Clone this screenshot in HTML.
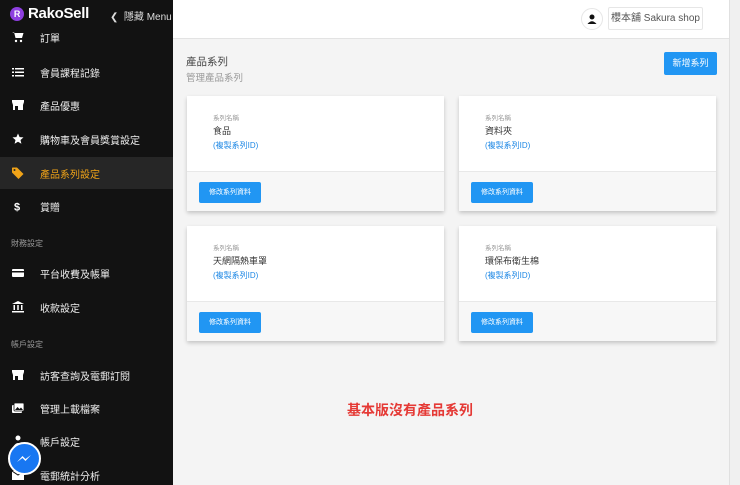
<!DOCTYPE html>
<html><head><meta charset="utf-8"><style>
*{margin:0;padding:0;box-sizing:border-box}
html,body{width:740px;height:485px;overflow:hidden}
body{background:#f4f4f4;font-family:"Liberation Sans","Noto Sans CJK TC",sans-serif;position:relative}
.sb{position:absolute;left:0;top:0;width:173px;height:485px;background:#121212;color:#eee}
.logo{position:absolute;left:10px;top:5px;display:flex;align-items:center;font-weight:bold;font-size:15px;color:#fff;letter-spacing:-0.3px}
.logo i{width:14px;height:14px;border-radius:50%;background:#8e3fe0;display:inline-block;margin-right:4px;font-style:normal;font-size:9px;text-align:center;line-height:14px}
.hide{position:absolute;left:110px;top:8px;font-size:10px;color:#ddd}
.it{position:absolute;left:0;width:173px;height:32px;font-size:10px;display:flex;align-items:center}
.it svg{margin-left:12px;margin-right:16px;flex:none}
.it.act{background:#262626;color:#f0a318}
.lab{position:absolute;left:11px;font-size:8px;color:#999}
.hd{position:absolute;left:173px;top:0;width:556px;height:39px;background:#fff;border-bottom:1px solid #e3e3e3}
.av{position:absolute;left:408px;top:8px;width:22px;height:22px;border-radius:50%;border:1px solid #e6e6e6;background:#fff}
.shop{position:absolute;left:435px;top:7px;width:95px;height:23px;border:1px solid #e6e6e6;font-size:10px;color:#555;line-height:21px;text-align:center;border-radius:2px;white-space:nowrap}
.sc{position:absolute;left:729px;top:0;width:11px;height:485px;background:#f0f0f0;border-left:1px solid #e0e0e0}
.t1{position:absolute;left:186px;top:54px;font-size:10.5px;color:#444}
.t2{position:absolute;left:186px;top:70px;font-size:9.5px;color:#999}
.add{position:absolute;left:664px;top:52px;width:53px;height:23px;background:#2196f3;color:#fff;font-size:9px;line-height:23px;text-align:center;border-radius:2px}
.card{position:absolute;width:257px;height:115px;background:#fff;box-shadow:0 2px 4px rgba(0,0,0,.2)}
.card .ft{position:absolute;left:0;top:75px;width:100%;height:40px;background:#f7f7f7;border-top:1px solid #e8e8e8}
.card .l{position:absolute;left:26px;top:16px;font-size:6.5px;color:#999}
.card .n{position:absolute;left:26px;top:28px;font-size:9px;color:#333}
.card .c{position:absolute;left:26px;top:44px;font-size:8px;color:#1e88e5}
.card .b{position:absolute;left:12px;top:10px;width:62px;height:21px;background:#2196f3;color:#fff;font-size:7px;line-height:21px;text-align:center;border-radius:2px}
.red{position:absolute;left:347px;top:400px;font-size:14px;color:#e53935;font-weight:bold}
.ms{position:absolute;left:8px;top:442px;width:33px;height:33px;border-radius:50%;background:#1877f2;border:2px solid #fff}
</style></head><body>
<div class="sb">
<div class="logo"><i>R</i>RakoSell</div>
<div class="hide">&#10094;&nbsp; 隱藏 Menu</div>
<div class="it" style="top:21px"><svg width="12" height="12" viewBox="0 0 12 12"><path d="M0 1h2l1.5 6h6.5l1.5-5H3" fill="#fff"/><circle cx="4" cy="10" r="1.2" fill="#fff"/><circle cx="9" cy="10" r="1.2" fill="#fff"/></svg>訂單</div>
<div class="it" style="top:56px"><svg width="12" height="12" viewBox="0 0 12 12" fill="#fff"><rect x="0" y="2" width="2" height="1.5"/><rect x="3" y="2" width="9" height="1.5"/><rect x="0" y="5.5" width="2" height="1.5"/><rect x="3" y="5.5" width="9" height="1.5"/><rect x="0" y="9" width="2" height="1.5"/><rect x="3" y="9" width="9" height="1.5"/></svg>會員課程記錄</div>
<div class="it" style="top:89px"><svg width="12" height="12" viewBox="0 0 12 12" fill="#fff"><rect x="0" y="1" width="12" height="2"/><path d="M0 3l1 3h10l1-3z"/><rect x="1" y="6" width="10" height="5"/><rect x="3" y="7" width="3" height="4" fill="#121212"/></svg>產品優惠</div>
<div class="it" style="top:123px"><svg width="12" height="12" viewBox="0 0 12 12"><path d="M6 0.5l1.6 3.6 3.9.3-3 2.6.9 3.8L6 8.8 2.6 10.8l.9-3.8-3-2.6 3.9-.3z" fill="#fff"/></svg>購物車及會員獎賞設定</div>
<div class="it act" style="top:157px"><svg width="12" height="12" viewBox="0 0 12 12"><path d="M0 1v4.5l6.5 6.5 5-5L5 0.5H0.5z" fill="#f0a318"/><circle cx="2.5" cy="3" r="1" fill="#262626"/></svg>產品系列設定</div>
<div class="it" style="top:190px"><svg width="12" height="12" viewBox="0 0 12 12"><text x="2" y="10.5" font-size="11" font-weight="bold" fill="#fff" font-family="Liberation Sans">$</text></svg>賞贈</div>
<div class="lab" style="top:238px">財務設定</div>
<div class="it" style="top:257px"><svg width="12" height="12" viewBox="0 0 12 12" fill="#fff"><rect x="0" y="2" width="12" height="8" rx="1"/><rect x="0" y="4" width="12" height="1.5" fill="#121212"/></svg>平台收費及帳單</div>
<div class="it" style="top:291px"><svg width="12" height="12" viewBox="0 0 12 12" fill="#fff"><path d="M6 0L0 3h12z"/><rect x="1.5" y="4" width="1.5" height="5"/><rect x="5.25" y="4" width="1.5" height="5"/><rect x="9" y="4" width="1.5" height="5"/><rect x="0" y="10" width="12" height="1.5"/></svg>收款設定</div>
<div class="lab" style="top:339px">帳戶設定</div>
<div class="it" style="top:359px"><svg width="12" height="12" viewBox="0 0 12 12" fill="#fff"><rect x="0" y="1" width="12" height="2"/><path d="M0 3l1 3h10l1-3z"/><rect x="1" y="6" width="10" height="5"/><rect x="3" y="7" width="3" height="4" fill="#121212"/></svg>訪客查詢及電郵訂閱</div>
<div class="it" style="top:392px"><svg width="12" height="12" viewBox="0 0 12 12" fill="#fff"><rect x="0" y="3" width="10" height="8" rx="1"/><rect x="2" y="1" width="10" height="8" rx="1" fill="#fff" stroke="#121212" stroke-width="0.8"/><path d="M3 8l2.5-3 2 2 1.5-1.5 2 2.5z" fill="#121212"/></svg>管理上載檔案</div>
<div class="it" style="top:425px"><svg width="12" height="12" viewBox="0 0 12 12" fill="#fff"><circle cx="6" cy="3" r="2.5"/><path d="M1 12q5-8 10 0z"/></svg>帳戶設定</div>
<div class="it" style="top:459px"><svg width="12" height="12" viewBox="0 0 12 12" fill="#fff"><rect x="0" y="2" width="12" height="9"/><path d="M0 2l6 4 6-4" stroke="#121212" fill="none"/></svg>電郵統計分析</div>
<div class="ms"><svg width="29" height="29" viewBox="0 0 29 29"><path d="M7 18 L12.5 12 L15.5 15 L21 11 L15.5 17 L12.5 14 Z" fill="#fff"/></svg></div>
</div>
<div class="hd">
<div class="av"><svg width="20" height="20" viewBox="0 0 20 20"><circle cx="10" cy="8" r="2.5" fill="#111"/><path d="M5.5 15 Q10 9.5 14.5 15Z" fill="#111"/></svg></div>
<div class="shop">櫻本舖 Sakura shop</div>
</div>
<div class="sc"></div>
<div class="t1">產品系列</div>
<div class="t2">管理產品系列</div>
<div class="add">新增系列</div>
<div class="card" style="left:187px;top:96px"><div class="l">系列名稱</div><div class="n">食品</div><div class="c">(複製系列ID)</div><div class="ft"><div class="b">修改系列資料</div></div></div>
<div class="card" style="left:459px;top:96px"><div class="l">系列名稱</div><div class="n">資料夾</div><div class="c">(複製系列ID)</div><div class="ft"><div class="b">修改系列資料</div></div></div>
<div class="card" style="left:187px;top:226px"><div class="l">系列名稱</div><div class="n">天網隔熱車罩</div><div class="c">(複製系列ID)</div><div class="ft"><div class="b">修改系列資料</div></div></div>
<div class="card" style="left:459px;top:226px"><div class="l">系列名稱</div><div class="n">環保布衛生棉</div><div class="c">(複製系列ID)</div><div class="ft"><div class="b">修改系列資料</div></div></div>
<div class="red">基本版沒有產品系列</div>
</body></html>
